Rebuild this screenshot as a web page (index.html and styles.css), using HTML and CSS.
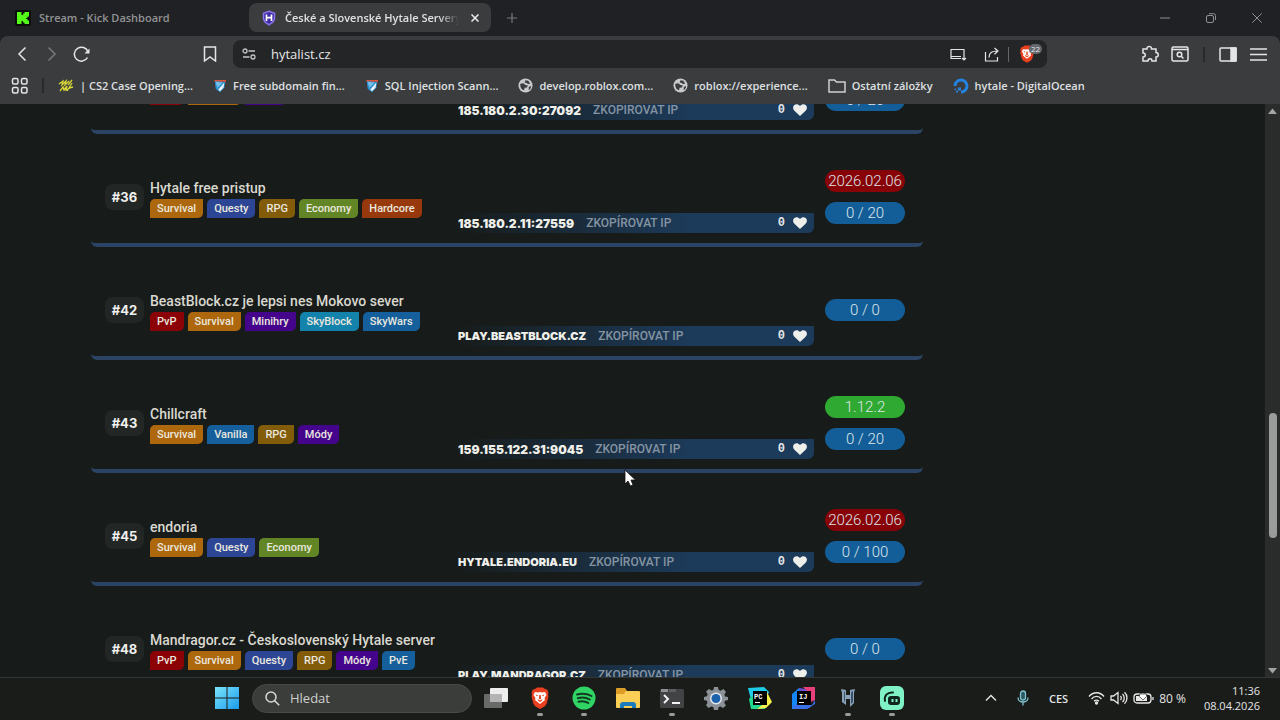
FILE: index.html
```
<!DOCTYPE html>
<html lang="cs">
<head>
    <meta charset="UTF-8">
    <meta name="viewport" content="width=device-width, initial-scale=1.0">
    <title>České a Slovenské Hytale Servery</title>
    <link rel="stylesheet" href="styles.css">
</head>
<body>

    <!-- Ikony použité vícekrát -->
    <svg class="defs" aria-hidden="true">
        <symbol id="heart" viewBox="0 0 14 12"><path fill="#eeeeea" d="M7 12L1.400 6.800C-.4 5-.3 2.200 1.400 1c1.700-1.300 4-.8 5.600 1 1.600-1.800 3.900-2.300 5.600-1 1.700 1.200 1.800 4 0 5.800z"/></symbol>
        <symbol id="globe" viewBox="0 0 16 16"><circle cx="8" cy="8" r="7.500" fill="#c9cacb"/><path fill="#3b3c3e" d="M2.500 6l3-.5 2.500 2 2.500.5-1 2-2.500.5-.5 2.500C4 12.500 2 10 2.500 6zM8 2.500l3 .5 2 3-2.500.5-1.500-1.500H7zM11.500 9.500l2.500-1c0 2-1 3.500-2.500 4.500z"/></symbol>
        <symbol id="badge" viewBox="0 0 16 16"><path fill="#2b8fd0" d="M2 2l12 1-1 7-5 5-5-4z"/><path fill="#e9f3f9" d="M13 4l-1 6-4 4-2-2z"/><path fill="#77bde5" d="M3 3l8 1-6 6z"/><path fill="#d6553e" d="M1 1h14l-.5 2.500L13 3 2 2.500z"/></symbol>
        <symbol id="brave" viewBox="0 0 20 22"><path fill="#e8401f" d="M5 2l2-1.500h6L15 2l2 .5 1.500 3-.5 2 .5 2-2 7.500-2 2.500L10 22l-4.500-2.500-2-2.500-2-7.500.5-2-.5-2L3 2.500z"/><path fill="#fff" d="M5 5l3 .5L10 5l2 .5 3-.5 1.500 3-2 3 .5 2-2.500 2L10 17l-2.500-2L5 13l.5-2-2-3z"/><path fill="#e8401f" d="M5.500 7.500l3 .7-2 .8zM14.500 7.500l-3 .7 2 .8zM9.300 8h1.400l.4 3.500L10 12.500l-1.100-1zM7.500 12l2.500 1.500 2.500-1.500-.8 2L10 15l-1.700-1z"/></symbol>
    </svg>

    <header class="browser">
        <div class="tabs">
            <div class="tab">
                <svg width="16" height="16" viewBox="0 0 16 16"><rect width="16" height="16" rx="2" fill="#0b0e0b"/><path fill="#53fc18" d="M2 2h4.500v3H8V3.500h1.500V2H14v4.500h-1.500V8H11v1h1.500v1.500H14V14H9.500v-1.500H8V11H6.500v3H2z"/></svg>
                <span>Stream - Kick Dashboard</span>
            </div>
            <div class="tab active">
                <svg width="16" height="16" viewBox="0 0 16 16"><path fill="#3e2da0" stroke="#8d72ee" stroke-width="1.500" d="M8 1.300l5.500 2v5c0 3.200-2.500 5-5.500 6.400-3-1.400-5.500-3.200-5.500-6.400v-5z"/><path stroke="#fff" stroke-width="1.700" d="M5.500 4.500v6.500M10.500 4.500v6.500M5.500 7.700h5"/></svg>
                <span class="tab-title">České a Slovenské Hytale Servery</span>
                <button class="close" aria-label="Zavřít kartu"><svg width="8" height="8" viewBox="0 0 8 8"><path d="M.5.5l7 7M7.500.5l-7 7" stroke="#eee" stroke-width="1.500"/></svg></button>
            </div>
            <button class="new-tab" aria-label="Nová karta"><svg width="10" height="10" viewBox="0 0 10 10"><path d="M5 0v10M0 5h10" stroke="#77787a" stroke-width="1.200"/></svg></button>
            <div class="window-buttons">
                <button aria-label="Minimalizovat"><svg width="10" height="10" viewBox="0 0 10 10"><path d="M0 5h10"/></svg></button>
                <button aria-label="Obnovit"><svg width="10" height="10" viewBox="0 0 10 10"><rect x=".5" y="2.500" width="7" height="7" rx="1.500"/><path d="M3 .7h4.500a2 2 0 0 1 2 2V7"/></svg></button>
                <button aria-label="Zavřít"><svg width="10" height="10" viewBox="0 0 10 10"><path d="M.3.3l9.400 9.400M9.700.3L.3 9.700"/></svg></button>
            </div>
        </div>

        <div class="toolbar">
            <button class="tool" aria-label="Zpět"><svg width="10" height="16" viewBox="0 0 10 16"><path d="M8.500 1.500L2 8l6.500 6.500"/></svg></button>
            <button class="tool dim" aria-label="Vpřed"><svg width="10" height="16" viewBox="0 0 10 16"><path d="M1.500 1.500L8 8l-6.500 6.500"/></svg></button>
            <button class="tool" aria-label="Načíst znovu"><svg width="18" height="16" viewBox="0 0 18 16"><path d="M14.500 11.500A7 7 0 1 1 15 6"/><path d="M16.500 2.500v5h-5z" fill="#e4e5e6" stroke="none"/></svg></button>
            <button class="tool bookmark" aria-label="Přidat záložku"><svg width="14" height="16" viewBox="0 0 14 16"><path d="M1.500 1h11v14L7 11l-5.500 4z"/></svg></button>
            <div class="address">
                <svg width="14" height="14" viewBox="0 0 14 14"><circle cx="3" cy="4" r="2"/><circle cx="11" cy="10" r="2"/><path d="M6.500 4H13M1 10h6.500"/></svg>
                <input type="text" value="hytalist.cz" aria-label="Adresa">
                <button class="tool" aria-label="Instalovat aplikaci"><svg width="17" height="13" viewBox="0 0 17 13"><path d="M11 10.500H1V1.500h13V7M1 8.500h10M14 6v6M12 10l2 2 2-2"/></svg></button>
                <button class="tool" aria-label="Sdílet"><svg width="16" height="15" viewBox="0 0 16 15"><path d="M1.500 5v9h12v-4M5 10.500C5 6 8 4 13 4M10.500 1L14 4l-3.500 3.300"/></svg></button>
                <span class="line"></span>
                <button class="shield" aria-label="Brave Shields"><svg width="16" height="18"><use href="#brave"/></svg><span>22</span></button>
            </div>
            <button class="tool" aria-label="Rozšíření"><svg width="18" height="18" viewBox="0 0 18 18"><path d="M2 4h4c-.5-3.500 5-3.500 4.500 0H15v3.500c3 0 3 4.500 0 4.500v4h-4c0-3-4-3-4 0H2v-4c3 0 3-4 0-4z"/></svg></button>
            <button class="tool" aria-label="Hledat na kartách"><svg width="18" height="16" viewBox="0 0 18 16"><rect x="1" y="1" width="16" height="14" rx="1.500"/><path d="M1 3.500h16"/><circle cx="8.500" cy="8.500" r="2.300"/><path d="M10.200 10.200l2.300 2.300"/></svg></button>
            <span class="line dark"></span>
            <button class="tool" aria-label="Postranní panel"><svg width="18" height="15" viewBox="0 0 18 15"><rect x="1" y="1" width="16" height="13" rx="1"/><path d="M12 1h5v13h-5z" fill="#e4e5e6"/></svg></button>
            <button class="tool" aria-label="Nabídka"><svg width="17" height="13" viewBox="0 0 17 13"><path d="M0 1h17M0 6.500h17M0 12h17"/></svg></button>
        </div>

        <nav class="bookmarks">
            <button class="tool" aria-label="Aplikace"><svg width="18" height="18" viewBox="0 0 18 18"><rect x="1.500" y="1.500" width="5.500" height="5.500" rx="1.500"/><rect x="10.500" y="1.500" width="5.500" height="5.500" rx="1.500"/><rect x="1.500" y="10.500" width="5.500" height="5.500" rx="1.500"/><rect x="10.500" y="10.500" width="5.500" height="5.500" rx="1.500"/></svg></button>
            <span class="line dark"></span>
            <a href="#"><svg width="16" height="14" viewBox="0 0 16 14"><path d="M1 5l4-3-1 4 4-4-1 4 4-4M14 1l-4 5M2 12l3-4 1 3 3-4-1 4 4-2M9 12l5-8M11 9l4-1" stroke="#d9d736" stroke-width="1.300" fill="none"/></svg>| CS2 Case Opening...</a>
            <a href="#"><svg width="14" height="14"><use href="#badge"/></svg>Free subdomain fin...</a>
            <a href="#"><svg width="14" height="14"><use href="#badge"/></svg>SQL Injection Scann...</a>
            <a href="#"><svg width="15" height="15"><use href="#globe"/></svg>develop.roblox.com...</a>
            <a href="#"><svg width="15" height="15"><use href="#globe"/></svg>roblox://experience...</a>
            <a href="#"><svg width="18" height="14" viewBox="0 0 18 14"><path d="M1 1h5.500l2 2H17v10H1z" fill="none" stroke="#cfd0d1" stroke-width="1.500"/></svg>Ostatní záložky</a>
            <a href="#"><svg width="16" height="16" viewBox="0 0 16 16"><path d="M2 8a6 6 0 1 1 6 6" fill="none" stroke="#2483e0" stroke-width="3"/><path d="M5 9.500h3v3H5zM3 12.500h2v2H3zM1.500 10.500H3V12H1.500z" fill="#2483e0"/></svg>hytale - DigitalOcean</a>
        </nav>
    </header>

    <main class="page">
        <ul class="servers">
            <li class="server">
                <span class="rank">#35</span>
                <div class="info">
                    <h2>Hytale server</h2>
                    <div class="tags"><span class="tag red">PvP</span><span class="tag orange">Survival</span><span class="tag purple">Módy</span></div>
                </div>
                <div class="ip-bar"><span class="ip">185.180.2.30:27092</span><button class="copy">Zkopírovat IP</button><button class="like">0 <svg width="14" height="12"><use href="#heart"/></svg></button></div>
                <div class="pills"><span class="pill version-old">2026.02.06</span><span class="pill">0 / 20</span></div>
            </li>
            <li class="server">
                <span class="rank">#36</span>
                <div class="info">
                    <h2>Hytale free pristup</h2>
                    <div class="tags"><span class="tag orange">Survival</span><span class="tag blue">Questy</span><span class="tag brown">RPG</span><span class="tag green">Economy</span><span class="tag rust">Hardcore</span></div>
                </div>
                <div class="ip-bar"><span class="ip">185.180.2.11:27559</span><button class="copy">Zkopírovat IP</button><button class="like">0 <svg width="14" height="12"><use href="#heart"/></svg></button></div>
                <div class="pills"><span class="pill version-old">2026.02.06</span><span class="pill">0 / 20</span></div>
            </li>
            <li class="server">
                <span class="rank">#42</span>
                <div class="info">
                    <h2>BeastBlock.cz je lepsi nes Mokovo sever</h2>
                    <div class="tags"><span class="tag red">PvP</span><span class="tag orange">Survival</span><span class="tag purple">Minihry</span><span class="tag cyan">SkyBlock</span><span class="tag azure">SkyWars</span></div>
                </div>
                <div class="ip-bar"><span class="ip domain">play.beastblock.cz</span><button class="copy">Zkopírovat IP</button><button class="like">0 <svg width="14" height="12"><use href="#heart"/></svg></button></div>
                <div class="pills"><span class="pill">0 / 0</span></div>
            </li>
            <li class="server">
                <span class="rank">#43</span>
                <div class="info">
                    <h2>Chillcraft</h2>
                    <div class="tags"><span class="tag orange">Survival</span><span class="tag azure">Vanilla</span><span class="tag brown">RPG</span><span class="tag purple">Módy</span></div>
                </div>
                <div class="ip-bar"><span class="ip">159.155.122.31:9045</span><button class="copy">Zkopírovat IP</button><button class="like">0 <svg width="14" height="12"><use href="#heart"/></svg></button></div>
                <div class="pills"><span class="pill version">1.12.2</span><span class="pill">0 / 20</span></div>
            </li>
            <li class="server">
                <span class="rank">#45</span>
                <div class="info">
                    <h2>endoria</h2>
                    <div class="tags"><span class="tag orange">Survival</span><span class="tag blue">Questy</span><span class="tag green">Economy</span></div>
                </div>
                <div class="ip-bar"><span class="ip domain">hytale.endoria.eu</span><button class="copy">Zkopírovat IP</button><button class="like">0 <svg width="14" height="12"><use href="#heart"/></svg></button></div>
                <div class="pills"><span class="pill version-old">2026.02.06</span><span class="pill">0 / 100</span></div>
            </li>
            <li class="server">
                <span class="rank">#48</span>
                <div class="info">
                    <h2>Mandragor.cz - Československý Hytale server</h2>
                    <div class="tags"><span class="tag red">PvP</span><span class="tag orange">Survival</span><span class="tag blue">Questy</span><span class="tag brown">RPG</span><span class="tag purple">Módy</span><span class="tag azure">PvE</span></div>
                </div>
                <div class="ip-bar"><span class="ip domain">play.mandragor.cz</span><button class="copy">Zkopírovat IP</button><button class="like">0 <svg width="14" height="12"><use href="#heart"/></svg></button></div>
                <div class="pills"><span class="pill">0 / 0</span></div>
            </li>
        </ul>
        <div class="scrollbar">
            <svg width="9" height="14" viewBox="0 0 9 14"><path d="M4.500 4.500L9 10H0z" fill="#a3a4a4"/></svg>
            <div class="track"><div class="thumb"></div></div>
            <svg width="9" height="14" viewBox="0 0 9 14"><path d="M4.500 10.500L9 5H0z" fill="#a3a4a4"/></svg>
        </div>
    </main>

    <footer class="taskbar">
        <button class="app start" aria-label="Start"><svg width="24" height="22" viewBox="0 0 24 22"><defs><linearGradient id="win" x1="0" y1="0" x2="1" y2="1"><stop offset="0" stop-color="#7be4fb"/><stop offset="1" stop-color="#1a9cec"/></linearGradient></defs><path fill="url(#win)" d="M0 0h11.500v10.500H0zM12.500 0H24v10.500H12.500zM0 11.500h11.500V22H0zM12.500 11.500H24V22H12.500z"/></svg></button>
        <label class="search">
            <svg width="15" height="15" viewBox="0 0 15 15"><circle cx="6" cy="6" r="5" fill="none" stroke="#d6d7d5" stroke-width="1.500"/><path d="M9.700 9.700l4.500 4.500" stroke="#d6d7d5" stroke-width="1.600"/></svg>
            <input type="text" placeholder="Hledat" aria-label="Hledat">
        </label>
        <div class="apps">
            <button class="app" aria-label="Plocha"><svg width="26" height="22" viewBox="0 0 26 22"><rect x="1" y="7" width="18" height="14" rx="1" fill="#696a69"/><rect x="7" y="1" width="18" height="14" rx="1" fill="#ededed"/><path d="M7 7h12v8H7z" fill="#b4b4b4"/></svg></button>
            <button class="app running" aria-label="Brave"><svg width="20" height="22"><use href="#brave"/></svg></button>
            <button class="app running" aria-label="Spotify"><svg width="24" height="24" viewBox="0 0 24 24"><circle cx="12" cy="12" r="11.500" fill="#2fd465"/><path d="M5 8.500c5-1.500 10-1 14.500 1.500M5.800 12.200c4.300-1.200 8.500-.7 12 1.300M6.500 15.700c3.500-.9 6.700-.5 9.700 1.200" fill="none" stroke="#123a20" stroke-width="2" stroke-linecap="round"/></svg></button>
            <button class="app" aria-label="Průzkumník souborů"><svg width="26" height="22" viewBox="0 0 26 22"><path fill="#dc9e27" d="M1 2a1 1 0 0 1 1-1h8l2 3h12v6H1z"/><path fill="#fbcf55" d="M1 7h8l2-3h13a1 1 0 0 1 1 1v15a1 1 0 0 1-1 1H2a1 1 0 0 1-1-1z"/><path fill="#1d7bbd" d="M5 21v-3a3 3 0 0 1 3-3h10a3 3 0 0 1 3 3v3h-4v-2H9v2z"/></svg></button>
            <button class="app running" aria-label="Terminál"><svg width="26" height="22" viewBox="0 0 26 22"><rect x="1" y="2" width="24" height="19" rx="1.500" fill="#414344"/><path fill="#8f9192" d="M2 2h7v3H2z"/><path fill="#5c5e5f" d="M10 2h7v3h-7z"/><path d="M5 8l4 4-4 4M13 16h8" fill="none" stroke="#f2f2f2" stroke-width="2"/></svg></button>
            <button class="app" aria-label="Nastavení"><svg width="24" height="24" viewBox="0 0 24 24"><path fill="#8b9196" d="M10 1h4l.7 3 2 .8L19.500 3 22 6l-1.600 2.600.6 1.900 3 .5v3l-3 .8-.8 2L22 19.500 19 22l-2.500-1.500-1.900.6L14 24h-4l-.8-2.900-2-.7L4.500 22 2 19.300l1.500-2.600-.7-1.900L0 14v-3l2.900-.7.8-2L2 5.500 5 3l2.500 1.600 1.900-.6z"/><circle cx="12" cy="12.500" r="6" fill="#e4e8ec"/><circle cx="12" cy="12.500" r="4.500" fill="#1b62ad"/></svg></button>
            <button class="app" aria-label="PyCharm"><svg width="26" height="24" viewBox="0 0 26 24"><path fill="#1fcbe8" d="M1 2l16-1 5 5-6 16H6z"/><path fill="#22d88f" d="M2 13l8-8 10 8-2 10H4z"/><path fill="#f7ef49" d="M20 6l5 10-6 6-9 1 10-8z"/><path d="M6 5h14v14H6z"/><path d="M8 16.500h5" stroke="#fff"/><text x="7" y="13" class="ide">PC</text></svg></button>
            <button class="app" aria-label="IntelliJ IDEA"><svg width="26" height="24" viewBox="0 0 26 24"><path fill="#1686f4" d="M1 8l7-6 12 12-4 9H1z"/><path fill="#6b4fd0" d="M8 2l14 2-3 18h-7z"/><path fill="#e8407d" d="M12 1h12v13l-6 3-2-12z"/><path fill="#3a6fe6" d="M3 19h18l3-5v4l-8 5H2z"/><path d="M6 5h14v14H6z"/><path d="M8 16.500h5" stroke="#fff"/><text x="8" y="13" class="ide">IJ</text></svg></button>
            <button class="app running" aria-label="Hytale"><svg width="16" height="20" viewBox="0 0 16 20"><path fill="#8aa3b8" d="M1 1l5 1v5h4V2l5-1-1 4v10l-4 4v-8H6v6l-4-3V5z"/><path fill="#3d526a" d="M4 3l1 1v10l-1-1zM11 4l2-1v11l-2 2z"/></svg></button>
            <button class="app running" aria-label="Nahrávání"><svg width="26" height="24" viewBox="0 0 26 24"><rect x="1" y="0" width="24" height="24" rx="6" fill="#7ff2c6"/><path d="M6 15c-1-5 2-9 8-8.500" fill="none" stroke="#10251e" stroke-width="2" stroke-linecap="round"/><rect x="9" y="10" width="12" height="9" rx="3" fill="#10251e"/><path d="M13.500 13v3M17.500 13v3" stroke="#7ff2c6" stroke-width="2"/></svg></button>
        </div>
        <div class="tray">
            <svg width="12" height="8" viewBox="0 0 12 8"><path d="M1 6.500l5-5 5 5"/></svg>
            <svg class="mic" width="12" height="16" viewBox="0 0 12 16"><rect x="3.500" y="1" width="5" height="9" rx="2.500" fill="#2c5a63"/><path d="M1 7.500c0 6 10 6 10 0M6 12v3.500"/></svg>
            <span class="lang">CES</span>
            <div class="status">
                <svg width="17" height="14" viewBox="0 0 17 14"><path d="M1 5.500c4-5 11-5 15 0M3.500 8c3-3.500 7-3.500 10 0M6 10.300c1.500-1.600 3.500-1.600 5 0"/><circle cx="8.500" cy="12" r="1" fill="#e8e8e6"/></svg>
                <svg width="18" height="14" viewBox="0 0 18 14"><path d="M1 5v4h2.500L8 12.500v-11L3.500 5zM10.500 5c1 1 1 3 0 4M12.500 3c2.300 2 2.300 6 0 8M14.500 1.300c3.300 3 3.300 8.400 0 11.400"/></svg>
                <svg width="21" height="14" viewBox="0 0 21 14"><rect x="1" y="3" width="17" height="9" rx="3"/><path d="M3 5h11v5H3z" fill="#e8e8e6" stroke="none"/><path d="M20 6v3"/><path d="M8 0v3M12 0v3M6.500 3h7v2.500L10 9 6.500 5.500z" fill="#fff" stroke="#1a1c1a" stroke-width=".6"/></svg>
                <span>80 %</span>
            </div>
            <time class="clock" datetime="2026-04-08T11:36">11:36<br>08.04.2026</time>
        </div>
    </footer>

    <svg class="cursor" width="13" height="18" viewBox="0 0 13 18" aria-hidden="true"><path d="M1 1v14l3-3 2.500 5 2.500-1-2-5h4.500z" fill="#fff" stroke="#111" stroke-width=".8"/></svg>

</body>
</html>
```
FILE: styles.css
```
* {
    margin: 0;
    padding: 0;
    box-sizing: border-box;
}

body {
    display: flex;
    flex-direction: column;
    height: 100vh;
    overflow: hidden;
    background-color: #171b19;
    font-family: "Open Sans", "Noto Sans", sans-serif;
    font-size: 12px;
    color: #e4e5e6;
}

button, input {
    background: none;
    border: none;
    font: inherit;
    color: inherit;
}

svg {
    display: block;
    flex-shrink: 0;
}

.defs {
    position: absolute;
    width: 0;
    height: 0;
}

/* Prohlížeč */
.browser {
    background-color: #202124;
}

.tabs {
    display: flex;
    align-items: center;
    height: 36px;
    padding: 0 0 1px 7px;
}

.tab {
    display: flex;
    align-items: center;
    gap: 8px;
    width: 242px;
    height: 29px;
    padding: 0 8px;
    border-radius: 8px;
    color: #929395;
    font-size: 11px;
    font-weight: 600;
}

.tab.active {
    padding: 0 12px;
    background-color: #3b3c3e;
    color: #e0e1e2;
}

.tab-title {
    flex: 1;
    overflow: hidden;
    white-space: nowrap;
    mask-image: linear-gradient(to right, #000 88%, transparent);
}

.close {
    padding: 0 0 0 4px;
}

.new-tab {
    padding: 16px;
}

.window-buttons {
    display: flex;
    margin-left: auto;
}

.window-buttons button {
    width: 46px;
    padding: 0 18px;
}

.window-buttons svg {
    fill: none;
    stroke: #909193;
}

.toolbar {
    display: flex;
    align-items: center;
    height: 36px;
    padding: 0 7px;
    background-color: #3b3c3e;
    border-radius: 8px 8px 0 0;
}

.tool {
    display: flex;
    justify-content: center;
    align-items: center;
    width: 30px;
    height: 28px;
}

.tool svg {
    fill: none;
    stroke: #e4e5e6;
    stroke-width: 1.5;
}

.tool.dim svg {
    stroke: #77787a;
}

.tool.bookmark {
    margin: 0 8px 0 98px;
}

.address {
    display: flex;
    align-items: center;
    flex: 1;
    height: 28px;
    margin-right: 88px;
    padding: 0 5px 0 9px;
    border-radius: 8px;
    background-color: #242527;
}

.address > svg {
    fill: none;
    stroke: #c5c6c7;
    stroke-width: 1.3;
}

.address input {
    flex: 1;
    min-width: 0;
    padding-left: 15px;
    font-size: 13px;
}

.address .tool {
    width: 33px;
}

.address .tool svg {
    stroke-width: 1.2;
}

.line {
    width: 1px;
    height: 15px;
    background-color: #66676a;
}

.line.dark {
    width: 2px;
    margin: 0 8px;
    background-color: #29292b;
}

.shield {
    display: flex;
    align-items: center;
    position: relative;
    width: 33px;
    height: 28px;
    padding-left: 10px;
}

.shield span {
    position: absolute;
    top: 4px;
    left: 20px;
    padding: 0 2px;
    border-radius: 5px;
    background-color: #63676e;
    font-size: 8px;
    line-height: 10px;
}

.bookmarks {
    display: flex;
    align-items: center;
    gap: 20px;
    height: 32px;
    padding: 0 5px 5px;
    background-color: #3b3c3e;
}

.bookmarks .line.dark {
    margin: 0 -6px 0 -13px;
}

.bookmarks a {
    display: flex;
    align-items: center;
    gap: 6px;
    color: #dfe0e1;
    font-size: 11px;
    font-weight: 600;
    text-decoration: none;
    white-space: nowrap;
}

/* Seznam serverů */
.page {
    display: flex;
    justify-content: space-between;
    flex: 1;
    min-height: 0;
    overflow: hidden;
}

.servers {
    width: 65%;
    margin: -83px 0 0 91px;
    list-style: none;
    font-family: Roboto, sans-serif;
}

.server {
    display: flex;
    align-items: center;
    height: 113px;
    padding: 17px 18px 0 14px;
    border-bottom: 4px solid #2b4364;
    border-radius: 6px;
}

.rank {
    width: 39px;
    margin-right: 6px;
    border-radius: 8px;
    background-color: #222726;
    color: #f0f0ee;
    font: bold 13px/26px Inter, sans-serif;
    text-align: center;
}

.info {
    flex: 1;
    min-width: 0;
    white-space: nowrap;
}

.info h2 {
    color: #d9d8d0;
    font-size: 14px;
    font-weight: 500;
    line-height: 22px;
}

.tags {
    display: flex;
    gap: 4px;
}

.tag {
    padding: 0 7px;
    border-radius: 5px 0 5px 0;
    color: #eae8df;
    font-size: 11px;
    font-weight: 500;
    line-height: 19px;
}

.red {
    background-color: #8b0207;
}

.orange {
    background-color: #ad670c;
}

.purple {
    background-color: #45048c;
}

.blue {
    background-color: #2c4695;
}

.brown {
    background-color: #835c0a;
}

.green {
    background-color: #628626;
}

.rust {
    background-color: #97390c;
}

.cyan {
    background-color: #1483ac;
}

.azure {
    background-color: #145f9c;
}

.ip-bar {
    display: flex;
    align-items: center;
    align-self: flex-end;
    width: 364px;
    height: 20px;
    margin: 0 11px 10px 0;
    padding: 0 7px 0 8px;
    border-radius: 0 0 6px 0;
    background-image: linear-gradient(to right, #171b19, #1c3a59 65%);
}

.ip {
    color: #f0f0ea;
    font: 900 12px Inter, sans-serif;
    text-transform: uppercase;
}

.ip.domain {
    font-size: 11px;
}

.copy {
    margin-left: 12px;
    color: #8594a3;
    font-size: 12px;
    font-weight: 500;
    text-transform: uppercase;
}

.like {
    display: flex;
    align-items: center;
    gap: 8px;
    margin-left: auto;
    font: bold 12px "Liberation Mono", monospace;
}

.pills {
    display: flex;
    flex-direction: column;
    gap: 10px;
    width: 80px;
}

.pill {
    border-radius: 11px;
    background-color: #135e98;
    color: #dfe6ea;
    font-size: 15px;
    font-weight: 300;
    line-height: 22px;
    text-align: center;
}

.pill.version {
    background-color: #2fa931;
}

.pill.version-old {
    background-color: #870307;
}

.scrollbar {
    display: flex;
    flex-direction: column;
    align-items: center;
    width: 15px;
    background-color: #292c2b;
}

.track {
    display: grid;
    grid-template-rows: 295fr 125fr 125fr;
    flex: 1;
}

.thumb {
    grid-row: 2;
    width: 8px;
    border-radius: 4px;
    background-color: #9a9b9b;
}

/* Hlavní panel */
.taskbar {
    display: flex;
    align-items: center;
    height: 43px;
    padding: 0 20px 2px 205px;
    border-top: 1px solid #343634;
    background-color: #1a1c1a;
}

.app {
    display: flex;
    justify-content: center;
    align-items: center;
    position: relative;
    width: 44px;
    height: 40px;
}

.running::after {
    content: "";
    position: absolute;
    bottom: 2px;
    width: 6px;
    height: 3px;
    border-radius: 2px;
    background-color: #9a9b9a;
}

.search {
    display: flex;
    align-items: center;
    gap: 10px;
    width: 220px;
    height: 29px;
    margin: 0 2px 0 3px;
    padding: 0 12px;
    border: 1px solid #484a48;
    border-radius: 15px;
    background-color: #3b3d3b;
}

.search input {
    width: 100%;
    font-size: 13px;
}

.search input::placeholder {
    color: #cfd0ce;
}

.apps {
    display: flex;
}

.ide {
    fill: #fff;
    font: bold 7px "Liberation Mono", monospace;
}

.tray {
    display: flex;
    align-items: center;
    gap: 20px;
    margin-left: auto;
}

.tray svg {
    fill: none;
    stroke: #e8e8e6;
    stroke-width: 1.3;
}

.tray .mic {
    stroke: #7fc4cf;
}

.status {
    display: flex;
    align-items: center;
    gap: 5px;
    margin-right: -2px;
    white-space: nowrap;
}

.lang {
    font-size: 11px;
    font-weight: 600;
}

.clock {
    font-size: 11px;
    line-height: 15px;
    text-align: right;
}

.cursor {
    position: fixed;
    top: 469px;
    left: 624px;
}
```
